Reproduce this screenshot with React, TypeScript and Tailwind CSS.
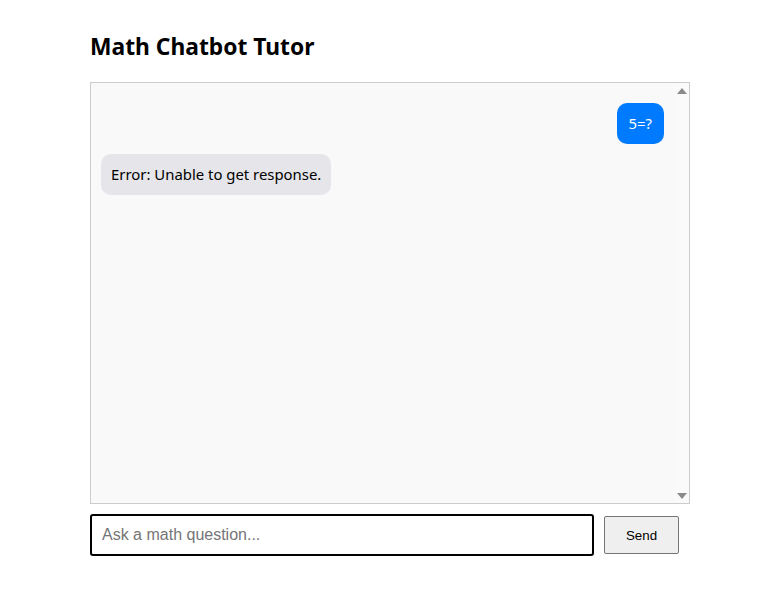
import React from "react";

export default function App() {
  return (
    <div className="min-h-[612px] bg-white pl-[90px] pt-[31px]" style={{ fontFamily: '"Noto Sans", "Open Sans", sans-serif' }}>
      <h2 className="text-[22.8px] leading-[32px] font-bold text-black mb-[19px]">Math Chatbot Tutor</h2>
      <div className="w-[600px] h-[422px] border border-[#cccccc] bg-[#f9f9f9] flex">
        <div className="flex-1 p-[10px]">
          <div className="flex flex-col">
            <div className="self-end mt-[10px] bg-[#007bff] text-white text-[14.9px] leading-[21px] px-[12px] py-[10px] rounded-[10px]">5=?</div>
            <div className="self-start mt-[10px] bg-[#e5e5ea] text-black text-[14.9px] leading-[21px] px-[10px] py-[10px] rounded-[10px]">Error: Unable to get response.</div>
          </div>
        </div>
        <div className="w-[15px] bg-[#fafafa] flex flex-col justify-between items-center pt-[5px] pb-[4px]">
          <svg width="10" height="6" viewBox="0 0 10 6"><polygon points="5,0 10,6 0,6" fill="#8a8a8a" /></svg>
          <svg width="10" height="6" viewBox="0 0 10 6"><polygon points="0,0 10,0 5,6" fill="#8a8a8a" /></svg>
        </div>
      </div>
      <div className="flex items-center mt-[10px] w-[600px]">
        <input
          className="w-[504px] h-[42px] border-2 border-black rounded-[3px] px-[10px] text-[16px] outline-none placeholder:text-[#757575]"
          style={{ fontFamily: '"Liberation Sans", Arial, sans-serif' }}
          placeholder="Ask a math question..."
        />
        <button
          className="ml-[10px] w-[75px] h-[38px] pt-[1px] bg-[#efefef] border border-[#767676] rounded-[2px] text-[13.33px] text-black"
          style={{ fontFamily: '"Liberation Sans", Arial, sans-serif' }}
        >
          Send
        </button>
      </div>
    </div>
  );
}
